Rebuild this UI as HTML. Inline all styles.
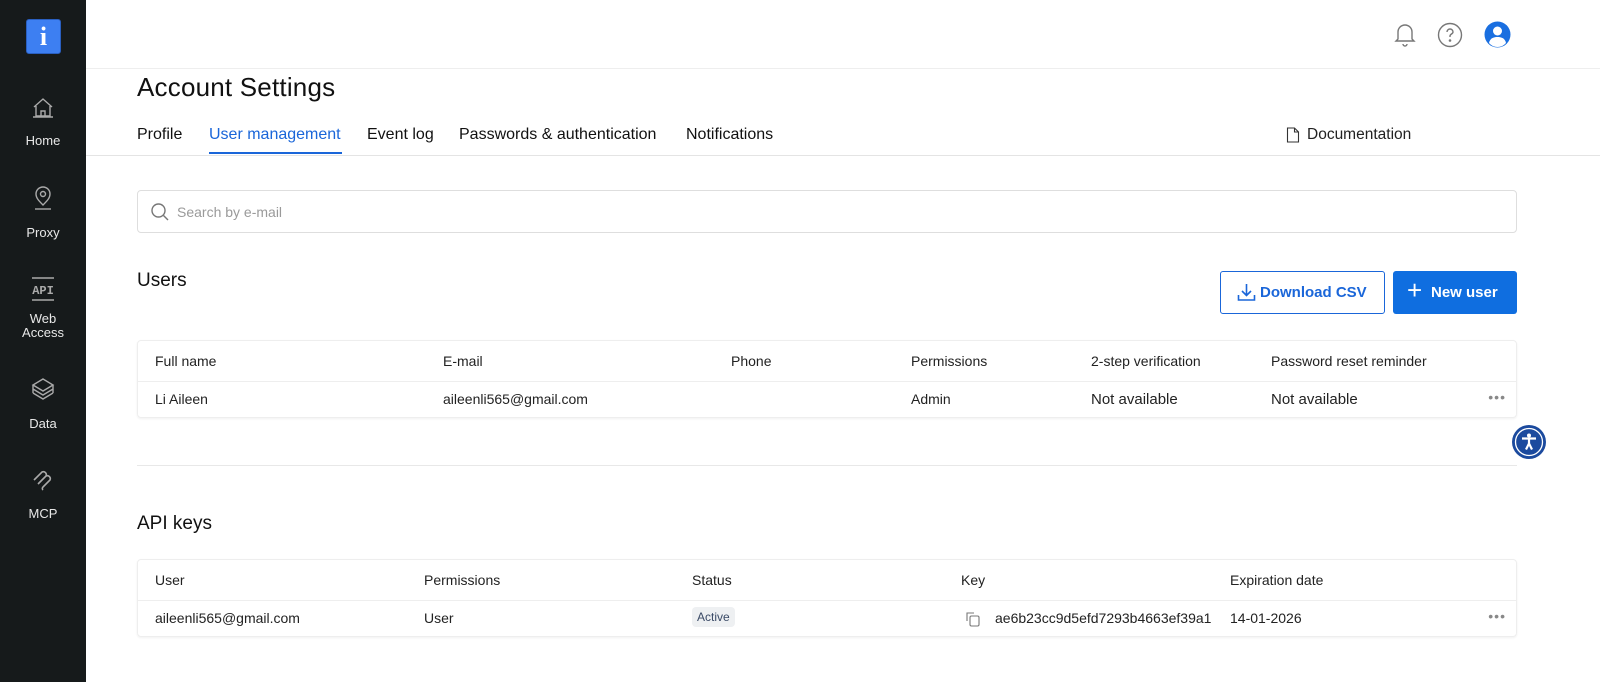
<!DOCTYPE html>
<html><head><meta charset="utf-8"><style>
*{box-sizing:border-box;margin:0;padding:0}
body{width:1600px;height:682px;overflow:hidden;font-family:"Liberation Sans",sans-serif;background:#fff;color:#1a1a1a;position:relative}
.sb{position:absolute;left:0;top:0;width:86px;height:682px;background:#161a1b}
.logo{position:absolute;left:26px;top:19px;width:35px;height:35px;background:#3d7ff2;border-radius:3px;border:1px solid #2a5fc0;color:#fff;font:bold 26px "Liberation Serif",serif;text-align:center;line-height:34px}
.ni{position:absolute;left:0;width:86px;text-align:center;color:#e8e8e8;font-size:13px;line-height:14px}
.ni svg{display:block;margin:0 auto 14px}
.hdr{position:absolute;left:86px;top:0;right:0;height:69px;border-bottom:1px solid #eee}
.abs{position:absolute}
h1{position:absolute;left:137px;top:72px;font-size:26px;font-weight:normal;letter-spacing:.2px;color:#111}
.tab{position:absolute;top:126px;font-size:16px;color:#111}
.tline{position:absolute;left:86px;right:0;top:155px;border-top:1px solid #e4e4e4}
.search{position:absolute;left:137px;top:190px;width:1380px;height:43px;border:1px solid #dedede;border-radius:4px}
.search span{position:absolute;left:39px;top:13px;font-size:14px;color:#9a9a9a}
h2{position:absolute;left:137px;font-size:19px;font-weight:normal;color:#111}
.btn{position:absolute;top:271px;height:43px;border-radius:3px;font-size:15px;font-weight:bold;line-height:41px}
.tbl{position:absolute;left:137px;width:1380px;border:1px solid #eee;border-radius:4px;box-shadow:0 1px 2px rgba(0,0,0,.06)}
.tbl .hr{height:41px;border-bottom:1px solid #eee;position:relative}
.tbl .r{height:35px;position:relative}
.c{position:absolute;font-size:14px;color:#222;top:12px}
.r .c{top:9px}
.dots{position:absolute;right:10px;top:7px;color:#888;font-size:14px;letter-spacing:1px}
</style></head><body>
<div class="sb">
<div class="logo">i</div>
<div class="ni" style="top:96px"><svg width="24" height="24" viewBox="0 0 24 24" fill="none" stroke="#aaa" stroke-width="1.4"><path d="M3 11L12 3l9 8M5 10v10h14V10M10 20v-5h4v5M2 21h20"/></svg>Home</div>
<div class="ni" style="top:186px"><svg width="24" height="26" viewBox="0 0 24 26" fill="none" stroke="#aaa" stroke-width="1.4"><path d="M12 19c-4-4-7-7-7-11a7 7 0 0114 0c0 4-3 7-7 11z"/><circle cx="12" cy="8" r="2.5"/><path d="M4 23h16"/></svg>Proxy</div>
<div class="ni" style="top:276px"><svg width="28" height="26" viewBox="0 0 28 26" fill="none" stroke="#aaa" stroke-width="1.6"><path d="M3 2h22M3 24h22"/><text x="14" y="18" fill="#aaa" stroke="none" font-size="12" font-weight="bold" text-anchor="middle" font-family="Liberation Mono">API</text></svg><div style="margin-top:-4px">Web<br>Access</div></div>
<div class="ni" style="top:377px"><svg width="26" height="26" viewBox="0 0 26 26" fill="none" stroke="#aaa" stroke-width="1.4"><path d="M13 2l10 6-10 6-10-6zM3 12l10 6 10-6M3 16l10 6 10-6M3 8v8M23 8v8"/></svg>Data</div>
<div class="ni" style="top:467px"><svg width="26" height="26" viewBox="0 0 26 26" fill="none" stroke="#aaa" stroke-width="1.6"><path d="M4 13l8-8a3 3 0 014 4l-8 8M8 17l8-8a3 3 0 014 4l-7 7a2 2 0 000 3"/></svg>MCP</div>
</div>
<div class="hdr"></div>
<svg class="abs" style="left:1392px;top:20px" width="26" height="28" viewBox="0 0 26 28" fill="none" stroke="#777" stroke-width="1.4"><path d="M6 19V12a7 7 0 0114 0v7l2 2H4zM11 24a2 2 0 004 0"/></svg>
<svg class="abs" style="left:1437px;top:22px" width="26" height="26" viewBox="0 0 26 26" fill="none" stroke="#777" stroke-width="1.4"><circle cx="13" cy="13" r="11.5"/><path d="M10 10a3 3 0 116 0c0 2-3 2-3 4v1"/><circle cx="13" cy="18.5" r=".6" fill="#777"/></svg>
<svg class="abs" style="left:1484px;top:21px" width="27" height="27" viewBox="0 0 27 27"><circle cx="13.5" cy="13.5" r="13" fill="#1a6fe0"/><circle cx="13.5" cy="10" r="4.5" fill="#fff"/><path d="M5 22c1-5 5-6 8.5-6s7.5 1 8.5 6a11 11 0 01-17 0z" fill="#fff"/></svg>
<h1>Account Settings</h1>
<div class="tab" style="left:137px">Profile</div>
<div class="tab" style="left:209px;color:#1a66d9">User management</div>
<div class="abs" style="left:209px;top:152px;width:133px;height:2px;background:#1a66d9"></div>
<div class="tab" style="left:367px">Event log</div>
<div class="tab" style="left:459px">Passwords &amp; authentication</div>
<div class="tab" style="left:686px">Notifications</div>
<svg class="abs" style="left:1286px;top:127px" width="14" height="16" viewBox="0 0 14 16" fill="none" stroke="#333" stroke-width="1.1"><path d="M1.5 1h7l4 4v10h-11zM8.5 1v4h4"/></svg>
<div class="tab" style="left:1307px;font-weight:normal;color:#222;font-size:15.5px">Documentation</div>
<div class="tline"></div>
<div class="search"><svg class="abs" style="left:12px;top:11px" width="20" height="20" viewBox="0 0 20 20" fill="none" stroke="#777" stroke-width="1.4"><circle cx="8.5" cy="8.5" r="6.5"/><path d="M13.5 13.5l4.5 4.5"/></svg><span>Search by e-mail</span></div>
<h2 style="top:270px">Users</h2>
<div class="btn" style="left:1220px;width:165px;border:1px solid #1a66d9;color:#1a66d9"><svg class="abs" style="left:16px;top:11px" width="19" height="19" viewBox="0 0 19 19" fill="none" stroke="#1a66d9" stroke-width="1.6"><path d="M9.5 1v11M5 8l4.5 4.5L14 8M1.5 12v5h16v-5"/></svg><span style="position:absolute;left:39px">Download CSV</span></div>
<div class="btn" style="left:1393px;width:124px;background:#0f6ee0;color:#fff"><span style="position:absolute;left:14px;top:-1px;font-size:26px;font-weight:normal">+</span><span style="position:absolute;left:38px;top:1px">New user</span></div>
<div class="tbl" style="top:340px">
<div class="hr"><span class="c" style="left:17px">Full name</span><span class="c" style="left:305px">E-mail</span><span class="c" style="left:593px">Phone</span><span class="c" style="left:773px">Permissions</span><span class="c" style="left:953px">2-step verification</span><span class="c" style="left:1133px">Password reset reminder</span></div>
<div class="r"><span class="c" style="left:17px">Li Aileen</span><span class="c" style="left:305px">aileenli565@gmail.com</span><span class="c" style="left:773px">Admin</span><span class="c" style="left:953px;font-size:15px">Not available</span><span class="c" style="left:1133px;font-size:15px">Not available</span><span class="dots">•••</span></div>
</div>
<svg class="abs" style="left:1512px;top:425px" width="34" height="34" viewBox="0 0 34 34"><circle cx="17" cy="17" r="17" fill="#1b4a9e"/><circle cx="17" cy="17" r="13.5" fill="none" stroke="#fff" stroke-width="1.3"/><circle cx="17" cy="10.5" r="2" fill="#fff"/><path d="M10 13.5h14M17 13.5v5M17 18.5l-3 6M17 18.5l3 6" stroke="#fff" stroke-width="2.2" fill="none"/></svg>
<div class="abs" style="left:137px;top:465px;width:1380px;border-top:1px solid #e8e8e8"></div>
<h2 style="top:513px">API keys</h2>
<div class="tbl" style="top:559px">
<div class="hr"><span class="c" style="left:17px">User</span><span class="c" style="left:286px">Permissions</span><span class="c" style="left:554px">Status</span><span class="c" style="left:823px">Key</span><span class="c" style="left:1092px">Expiration date</span></div>
<div class="r"><span class="c" style="left:17px">aileenli565@gmail.com</span><span class="c" style="left:286px">User</span><span class="c" style="left:554px;top:6px;background:#eef0f2;color:#3a4a66;font-size:12px;padding:3px 5px;border-radius:4px">Active</span><svg class="abs" style="left:827px;top:10px" width="16" height="16" viewBox="0 0 16 16" fill="none" stroke="#777" stroke-width="1.1"><path d="M2 10V2h7"/><rect x="5" y="5" width="9" height="10" rx="1.5"/></svg><span class="c" style="left:857px;width:218px;overflow:hidden;white-space:nowrap">ae6b23cc9d5efd7293b4663ef39a1</span><span class="c" style="left:1092px">14-01-2026</span><span class="dots">•••</span></div>
</div>
</body></html>
